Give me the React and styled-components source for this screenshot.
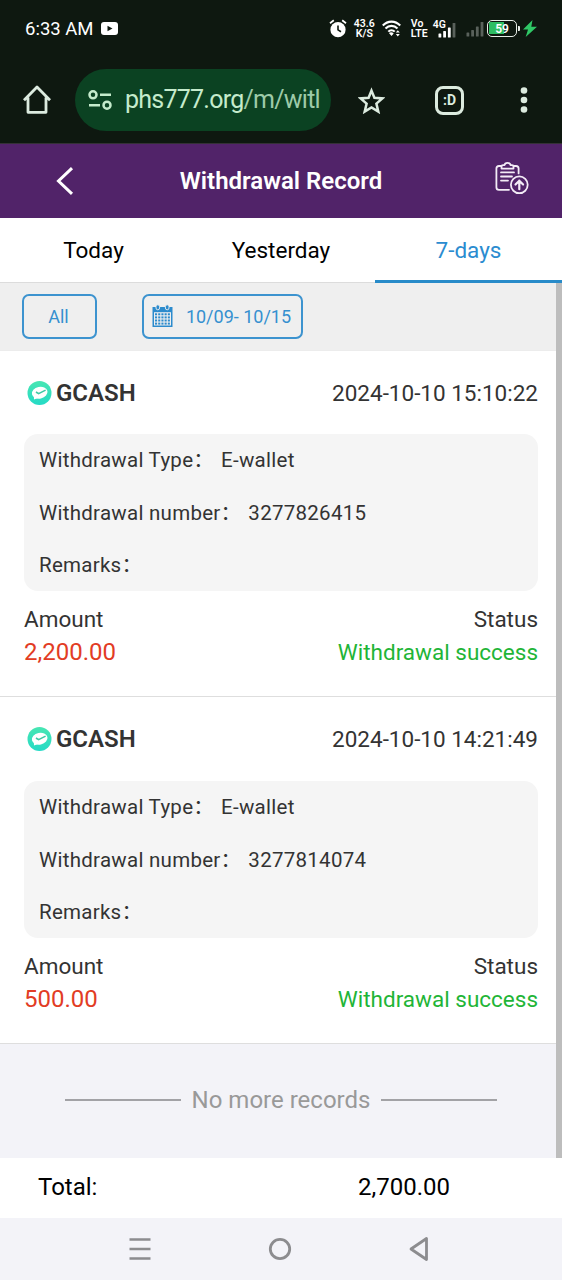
import styled, { createGlobalStyle } from "styled-components";

const GlobalStyle = createGlobalStyle`
  * {
    box-sizing: border-box;
  }

  body {
    margin: 0;
    font-family: Roboto, "Noto Sans CJK SC", sans-serif;
    color: #333;
    background: #fff;
  }

  svg {
    display: block;
    flex: none;
  }
`;

const Screen = styled.div`
  display: flex;
  flex-direction: column;
  width: 562px;
  height: 1280px;
  overflow: hidden;
`;

const Text = styled.span`
  font-size: ${(p) => p.$size}px;
  font-weight: ${(p) => p.$weight || 400};
  color: ${(p) => p.$color || "inherit"};
  white-space: pre;
`;

/* ---------- system + browser bars ---------- */

const StatusBar = styled.div`
  display: flex;
  align-items: center;
  justify-content: space-between;
  height: 58px;
  padding: 0 25px 1px;
  background: #0e1810;
  color: #fff;
`;

const StatusGroup = styled.div`
  display: flex;
  align-items: center;
  gap: ${(p) => p.$gap || 0}px;
`;

const StackedLabel = styled.div`
  display: grid;
  grid-auto-rows: 10px;
  width: ${(p) => p.$width}px;
  margin: 0 ${(p) => p.$right}px 0 ${(p) => p.$left}px;
  font-size: 10.5px;
  font-weight: 600;
  line-height: 10px;
  justify-items: ${(p) => p.$align || "start"};
  white-space: nowrap;
`;

const Mobile = styled.div`
  display: flex;
  align-items: flex-start;
  height: 18px;
  font-size: 10.5px;
  font-weight: 600;
  line-height: 10px;

  svg {
    margin: 2px 0 0 -8px;
  }
`;

const IdleSim = styled.div`
  margin-left: 10px;
`;

const Battery = styled.div`
  display: flex;
  align-items: center;
  justify-content: center;
  width: 30px;
  height: 17px;
  margin-left: 3px;
  border: 1.5px solid #e8eee8;
  border-radius: 5px;
  background: linear-gradient(90deg, #2dbd62 62%, transparent 62%) 1px 1px / 25px 12px no-repeat;
  font-size: 12px;
  font-weight: 600;
  line-height: 1;
`;

const BatteryTip = styled.div`
  width: 2px;
  height: 5px;
  margin: 0 3px 0 1px;
  border-radius: 0 1px 1px 0;
  background: #e8eee8;
`;

const BrowserBar = styled.div`
  display: flex;
  align-items: center;
  height: 86px;
  padding: 0 33px 1px 23px;
  background: #0e1810;
  border-bottom: 1px solid #343136;
  color: #dcebdf;
`;

const AddressBar = styled.div`
  display: flex;
  align-items: center;
  width: 256px;
  height: 62px;
  margin: 0 27px 0 24px;
  padding-left: 13px;
  border-radius: 31px;
  background: #0b4222;
  color: #c5ebcc;
`;

const Url = styled.div`
  margin-left: 13px;
  font-size: 25px;
  letter-spacing: -0.75px;
  line-height: 34px;
  white-space: nowrap;

  span {
    color: #9dcaa8;
  }
`;

const TabCount = styled.div`
  display: flex;
  align-items: center;
  justify-content: center;
  width: 29px;
  height: 29px;
  margin: 0 56px 0 50px;
  border: 3px solid #dcebdf;
  border-radius: 8px;
  font-size: 14px;
  font-weight: 700;
`;

/* ---------- page ---------- */

const Header = styled.header`
  display: grid;
  grid-template-columns: 130px 1fr 130px;
  align-items: center;
  height: 74px;
  background: #512369;
  color: #fff;
  text-align: center;

  svg {
    justify-self: center;
  }

  svg:last-child {
    margin: 0 0 6px 30px;
  }
`;

const Tabs = styled.nav`
  display: grid;
  grid-template-columns: 187px 188px 187px;
  height: 65px;
  background: #fff;
`;

const Tab = styled.div`
  display: flex;
  align-items: center;
  justify-content: center;
  border-bottom: ${(p) => (p.$active ? "3px solid #288bc9" : "1px solid #dcdcdc")};
  padding-top: ${(p) => (p.$active ? 2 : 0)}px;
  color: ${(p) => (p.$active ? "#2b8cd0" : "#000")};
  font-size: 22.5px;
`;

const Content = styled.main`
  display: flex;
  height: 875px;
`;

const List = styled.div`
  width: 556px;
  background: #f3f3f8;
`;

const Scrollbar = styled.div`
  width: 6px;
  background: #bdbdbd;
`;

const Filters = styled.div`
  display: flex;
  gap: 45px;
  height: 68px;
  padding: 11px 22px;
  background: #efefef;
  border-bottom: 1px solid #ececec;
`;

const FilterButton = styled.div`
  display: flex;
  align-items: center;
  justify-content: center;
  gap: 13px;
  width: ${(p) => p.$width}px;
  height: 45px;
  padding: 0 2px 1px 0;
  border: 2px solid #3c93cf;
  border-radius: 7px;
  color: #3590cf;
  font-size: 18px;
`;

const Record = styled.section`
  height: 346px;
  padding: 16px 18px 0 24px;
  background: #fff;
  border-bottom: 1px solid #dedede;

  & + & {
    height: 347px;
  }
`;

const Row = styled.div`
  display: flex;
  align-items: center;
  justify-content: space-between;
  height: ${(p) => p.$height}px;
`;

const Wallet = styled.div`
  display: flex;
  align-items: center;
  gap: 4px;
  padding-left: 3px;
`;

const Details = styled.div`
  display: grid;
  grid-template-rows: repeat(3, 52.4px);
  align-items: center;
  height: 157px;
  margin: 15px 0 11px;
  padding-left: 15px;
  border-radius: 14px;
  background: #f5f5f5;

  ${Record} + ${Record} & {
    margin-top: 16px;
    padding-top: 0;
  }
`;

const Field = styled.div`
  display: flex;
  gap: 7px;
  font-size: 20.5px;
  letter-spacing: 0.27px;
  line-height: 30px;
  white-space: nowrap;
`;

const EndOfList = styled.div`
  display: flex;
  align-items: center;
  justify-content: center;
  gap: 11px;
  height: 112px;
  padding-left: 6px;
  color: #999;
`;

const Rule = styled.div`
  width: 116px;
  height: 2px;
  background: #a2a2a6;
`;

const Total = styled.footer`
  display: grid;
  grid-template-columns: 320px 1fr;
  align-items: center;
  height: 60px;
  padding: 0 0 2px 38px;
  background: #fff;
  color: #000;
`;

const NavBar = styled.div`
  display: flex;
  align-items: center;
  justify-content: center;
  gap: 117px;
  height: 62px;
  padding-right: 4px;
  background: #f3f3f8;
`;

const records = [
  { date: "2024-10-10 15:10:22", number: "3277826415", amount: "2,200.00" },
  { date: "2024-10-10 14:21:49", number: "3277814074", amount: "500.00" },
];

function AlarmIcon() {
  return (
    <svg width="18" height="19" viewBox="0 0 18 19" fill="none">
      <circle cx="9" cy="10.7" r="7.6" fill="#fff" />
      <path d="M1 4.2 4.8 1.2M13.2 1.2 17 4.2" stroke="#fff" strokeWidth="1.8" />
      <path d="M9 6.6v4.3l3 1.8" stroke="#0e1810" strokeWidth="1.6" />
    </svg>
  );
}

function WifiIcon() {
  return (
    <svg width="19" height="17" viewBox="0 0 19 17" fill="none" stroke="#fff" strokeWidth="2.1">
      <path d="M.8 5.5c5-5.2 12.4-5.2 17.4 0M3.5 8.6c3.5-3.6 8.5-3.6 12 0M6.3 11.6c1.8-1.9 4.6-1.9 6.4 0" />
      <path d="m6.9 13 2.6 3 2.2-2.6c-1.2-1.2-3.4-1.4-4.8-.4Z" fill="#fff" stroke="none" />
      <path d="m15.8 10.2 2 2.4h-4ZM15.8 16.4l2-2.4h-4Z" fill="#fff" stroke="none" />
    </svg>
  );
}

function SignalIcon({ bars }) {
  return (
    <svg width="18" height="16" viewBox="0 0 18 16">
      {[0, 1, 2, 3].map((i) => (
        <rect
          key={i}
          x={i * 4.7 + 0.5}
          y={[11.5, 9, 5.5, 1][i]}
          width="2.8"
          height={[4, 6.5, 10, 14.5][i]}
          rx=".6"
          fill={i < bars ? "#fff" : "#59615b"}
        />
      ))}
    </svg>
  );
}

function HomeIcon() {
  return (
    <svg width="28" height="30" viewBox="0 0 28 30" fill="none" stroke="#dcebdf" strokeWidth="2.8" strokeLinejoin="round">
      <path d="M1 15.3 14 2l13 13.3M5 12.4v14.9h18V12.4" />
    </svg>
  );
}

function SiteIcon() {
  return (
    <svg width="24" height="22" viewBox="0 0 24 22" fill="none" stroke="#c5ebcc" strokeWidth="2.5">
      <circle cx="5" cy="5.8" r="3.5" />
      <path d="M12 5.8h11M1 16.2h11" />
      <circle cx="19" cy="16.2" r="3.5" />
    </svg>
  );
}

function StarIcon() {
  return (
    <svg width="27" height="28" viewBox="0 0 27 28" fill="none" stroke="#dcebdf" strokeWidth="2.5">
      <path d="m13.500 4.600 2.900 7.200 8 .6-6 5.200 1.900 8-6.800-4.200-6.800 4.200 1.900-8-6-5.200 8-.6Z" />
    </svg>
  );
}

function ClipboardIcon() {
  return (
    <svg width="34" height="34" viewBox="0 0 34 34" fill="none" stroke="#f3ebf6" strokeWidth="1.8" strokeLinecap="round" strokeLinejoin="round">
      <path d="M6 5H4Q1.400 5 1.400 7.600v18.600q0 2.600 2.600 2.600h10M19 5h2q2.600 0 2.600 2.600v4.800" />
      <path d="M6.500 7.600V5.500q0-1.300 1.500-1.300h1.500c.4-3.200 5.600-3.200 6 0H17q1.500 0 1.500 1.300v2.100Z" />
      <path d="M6 11.400h13M6 15.500h11M6 19.600h7" />
      <circle cx="24.300" cy="23.800" r="8.400" />
      <path d="M24.300 28.200v-8.500m-3.800 3.800 3.800-3.800 3.800 3.800" strokeWidth="2.200" />
    </svg>
  );
}

function CalendarIcon() {
  const cells = [];
  for (let r = 0; r < 4; r++) {
    for (let c = 0; c < 5; c++) {
      cells.push(<rect key={`${r}-${c}`} x={3 + c * 3.2} y={9.3 + r * 3.1} width="2.1" height="2" />);
    }
  }
  return (
    <svg width="21" height="24" viewBox="0 0 21 24">
      <path d="M.5 3h20v20H.5Z" fill="#2c8bcd" />
      <path d="M2 8.2h17v13.300H2Z" fill="#efefef" />
      <g fill="#2c8bcd">{cells}</g>
      <rect x="4" y=".8" width="3.6" height="5" rx="1.8" fill="#2c8bcd" stroke="#efefef" strokeWidth=".9" />
      <rect x="13.4" y=".8" width="3.6" height="5" rx="1.8" fill="#2c8bcd" stroke="#efefef" strokeWidth=".9" />
    </svg>
  );
}

function WalletIcon() {
  return (
    <svg width="25" height="26" viewBox="0 0 25 26">
      <defs>
        <linearGradient id="wallet" x1="0" y1="0" x2="0" y2="1">
          <stop offset="0" stopColor="#48e6b2" />
          <stop offset="1" stopColor="#25dac6" />
        </linearGradient>
      </defs>
      <circle cx="12.5" cy="13" r="12" fill="url(#wallet)" />
      <ellipse cx="12.7" cy="12.7" rx="7.9" ry="5.9" transform="rotate(-12 12.7 12.7)" fill="#fff" />
      <path d="m6.800 15.500.2 4 4-1.500Z" fill="#fff" />
      <path d="m9 12 2.600 1.700 7-3.600" fill="none" stroke="#3fc9a5" strokeWidth="1.600" />
    </svg>
  );
}

function RecordItem({ record }) {
  return (
    <Record>
      <Row $height={52}>
        <Wallet>
          <WalletIcon />
          <Text $size={24} $weight={600}>GCASH</Text>
        </Wallet>
        <Text $size={22.5}>{record.date}</Text>
      </Row>
      <Details>
        <Field>
          <span>Withdrawal Type：</span>
          <span>E-wallet</span>
        </Field>
        <Field>
          <span>Withdrawal number：</span>
          <span>{record.number}</span>
        </Field>
        <Field>
          <span>Remarks：</span>
        </Field>
      </Details>
      <Row $height={33}>
        <Text $size={22.5}>Amount</Text>
        <Text $size={22.5}>Status</Text>
      </Row>
      <Row $height={34}>
        <Text $size={24} $color="#e23c24">{record.amount}</Text>
        <Text $size={22.5} $color="#1fb537">Withdrawal success</Text>
      </Row>
    </Record>
  );
}

export default function App() {
  return (
    <>
      <GlobalStyle />
      <Screen>
        <StatusBar>
          <StatusGroup $gap={8}>
            <Text $size={18.5}>6:33 AM</Text>
            <svg width="17" height="13" viewBox="0 0 17 13">
              <rect width="17" height="13" rx="3" fill="#fff" />
              <path d="m6.5 3.7 5 2.8-5 2.8Z" fill="#0e1810" />
            </svg>
          </StatusGroup>
          <StatusGroup>
            <AlarmIcon />
            <StackedLabel $width={21} $left={7} $right={7} $align="center">
              <span>43.6</span>
              <span>K/S</span>
            </StackedLabel>
            <WifiIcon />
            <StackedLabel $width={15} $left={10} $right={7}>
              <span>Vo</span>
              <span>LTE</span>
            </StackedLabel>
            <Mobile>
              4G
              <SignalIcon bars={3} />
            </Mobile>
            <IdleSim>
              <SignalIcon bars={0} />
            </IdleSim>
            <Battery>59</Battery>
            <BatteryTip />
            <svg width="14" height="17" viewBox="0 0 14 17">
              <path d="M9.5 0 0 9.6h5L2.7 17 14 6.7H8.3Z" fill="#2fc866" />
            </svg>
          </StatusGroup>
        </StatusBar>

        <BrowserBar>
          <HomeIcon />
          <AddressBar>
            <SiteIcon />
            <Url>
              phs777.org<span>/m/witl</span>
            </Url>
          </AddressBar>
          <StarIcon />
          <TabCount>:D</TabCount>
          <svg width="8" height="28" viewBox="0 0 8 28" fill="#dcebdf">
            <circle cx="4" cy="4.5" r="3.3" />
            <circle cx="4" cy="14" r="3.3" />
            <circle cx="4" cy="23.5" r="3.3" />
          </svg>
        </BrowserBar>

        <Header>
          <svg width="18" height="28" viewBox="0 0 18 28" fill="none" stroke="#fff" strokeWidth="3">
            <path d="M16 1.2 2.500 14 16 26.800" />
          </svg>
          <Text $size={24} $weight={600}>Withdrawal Record</Text>
          <ClipboardIcon />
        </Header>

        <Tabs>
          <Tab>Today</Tab>
          <Tab>Yesterday</Tab>
          <Tab $active>7-days</Tab>
        </Tabs>

        <Content>
          <List>
            <Filters>
              <FilterButton $width={75}>All</FilterButton>
              <FilterButton $width={161}>
                <CalendarIcon />
                <span>10/09- 10/15</span>
              </FilterButton>
            </Filters>
            {records.map((record) => (
              <RecordItem key={record.number} record={record} />
            ))}
            <EndOfList>
              <Rule />
              <Text $size={24}>No more records</Text>
              <Rule />
            </EndOfList>
          </List>
          <Scrollbar />
        </Content>

        <Total>
          <Text $size={24}>Total:</Text>
          <Text $size={24}>2,700.00</Text>
        </Total>

        <NavBar>
          <svg width="22" height="24" viewBox="0 0 22 24" stroke="#8c8c8f" strokeWidth="2.7">
            <path d="M.5 2.5h21M.5 12h21M.5 21.5h21" />
          </svg>
          <svg width="24" height="24" viewBox="0 0 24 24" fill="none" stroke="#8c8c8f" strokeWidth="2.8">
            <circle cx="12" cy="12" r="9.7" />
          </svg>
          <svg width="20" height="26" viewBox="0 0 20 26" fill="none" stroke="#8c8c8f" strokeWidth="2.8" strokeLinejoin="round">
            <path d="M17.5 2.5v21L2 13Z" />
          </svg>
        </NavBar>
      </Screen>
    </>
  );
}
